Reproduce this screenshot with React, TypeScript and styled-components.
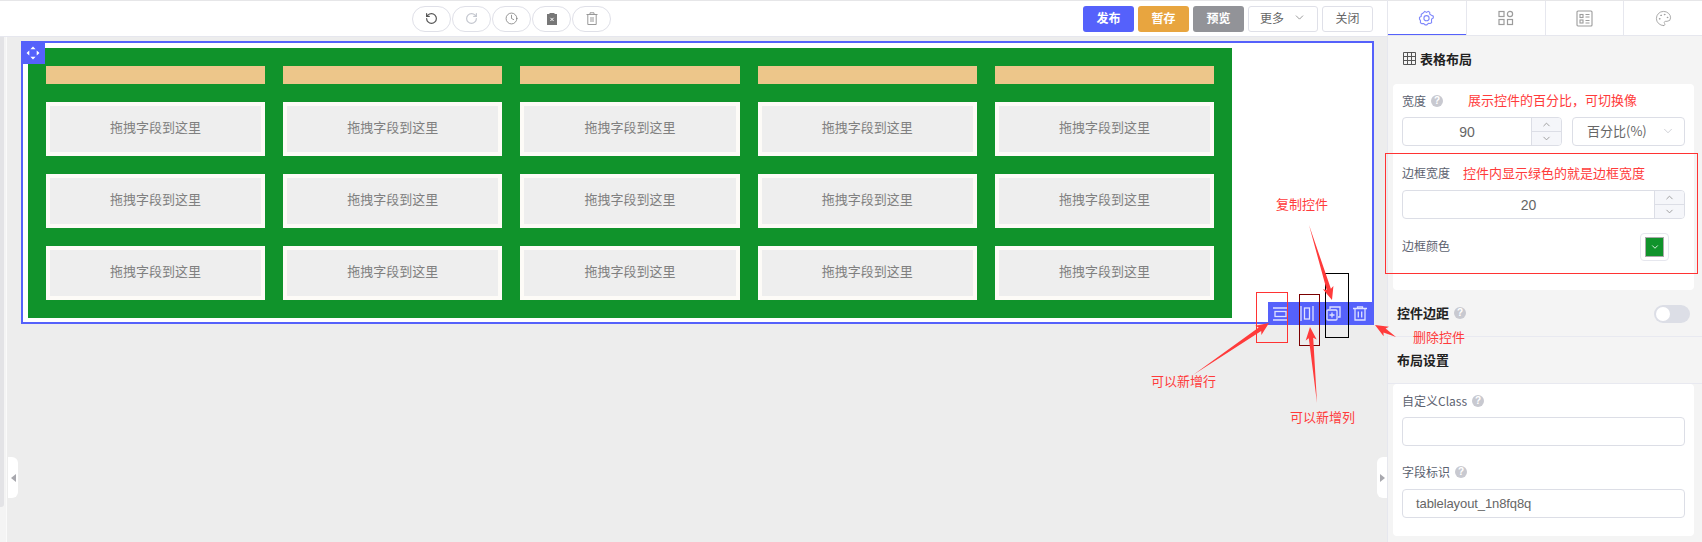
import React from "react";
import styled, { createGlobalStyle } from "styled-components";
import { ChevronDown, ChevronUp, Clock, Palette, RotateCcw, RotateCw } from "lucide-react";

const GlobalStyle = createGlobalStyle`
  * { box-sizing: border-box; }
  html, body { margin: 0; padding: 0; background: #ededed; }
  body { font-family: "Liberation Sans", "Noto Sans CJK SC", sans-serif; }
`;

const Page = styled.div`
  position: relative;
  display: flex;
  width: 1702px;
  height: 542px;
  overflow: hidden;
`;

const Workspace = styled.div`
  display: flex;
  flex-direction: column;
  width: 1387px;
`;

const TopBar = styled.div`
  display: flex;
  align-items: center;
  height: 37px;
  padding: 0 14px 0 412px;
  background: #fff;
  border-top: 1px solid #e6e6e8;
  border-bottom: 1px solid #e6e7ee;
`;

const HistoryGroup = styled.div`
  display: flex;
  gap: 1px;
  margin-right: auto;
`;

const HistoryButton = styled.button<{ $color: string }>`
  display: flex;
  align-items: center;
  justify-content: center;
  width: 39px;
  height: 26px;
  padding: 0;
  background: #fff;
  border: 1px solid #dfe0e8;
  border-radius: 13px;
  color: ${(props) => props.$color};
`;

const ActionGroup = styled.div`
  display: flex;
  gap: 4px;
`;

const ActionButton = styled.button<{ $bg: string }>`
  width: 51px;
  height: 26px;
  padding: 0 0 3px;
  background: ${(props) => props.$bg};
  border: none;
  border-radius: 3px;
  color: #fff;
  font: bold 12px "Noto Sans CJK SC", sans-serif;
`;

const PlainButton = styled.button<{ $width: number }>`
  display: flex;
  align-items: center;
  justify-content: center;
  gap: 9px;
  width: ${(props) => props.$width}px;
  height: 26px;
  padding: 0 0 2px;
  background: #fff;
  border: 1px solid #dfe0e8;
  border-radius: 3px;
  color: #666;
  font: 12px "Noto Sans CJK SC", sans-serif;
`;

const CanvasRow = styled.div`
  display: flex;
  flex: 1;
`;

const Rail = styled.div`
  width: 7px;
  background: #f4f4f4;
  border-right: 1px solid #fafafa;
`;

const RailBar = styled.div`
  width: 4px;
  height: 470px;
  background: #e3e3e6;
  border-radius: 0 0 3px 0;
`;

const Canvas = styled.div`
  position: relative;
  flex: 1;
  padding: 4px 13px 0 14px;
  background: #ededed;
`;

const Widget = styled.div`
  position: relative;
  height: 283px;
  padding: 5px;
  background: #fff;
  border: 2px solid #5561fb;
`;

const Grip = styled.div`
  position: absolute;
  top: -2px;
  left: -2px;
  display: flex;
  align-items: center;
  justify-content: center;
  width: 24px;
  height: 23px;
  background: #5561fb;
`;

const WidgetTools = styled.div`
  position: absolute;
  right: -2px;
  bottom: -3px;
  display: flex;
  align-items: center;
  justify-content: flex-end;
  width: 106px;
  height: 23px;
  padding-right: 1px;
  background: #5561fb;
`;

const ToolIcon = styled.span`
  display: flex;
  align-items: center;
  justify-content: center;
  width: 26.5px;
`;

const GreenTable = styled.div`
  display: grid;
  grid-template-columns: repeat(5, 1fr);
  gap: 18px;
  width: 1204px;
  padding: 18px;
  background: #10932b;
`;

const HeadBar = styled.div`
  height: 18px;
  background: #edc68a;
`;

const DropCell = styled.div`
  display: flex;
  align-items: center;
  justify-content: center;
  height: 54px;
  padding-bottom: 6px;
  background: #eee;
  border: 4px solid #fdfbf7;
  color: #808080;
  font: 13px "Noto Sans CJK SC", sans-serif;
`;

const SideHandle = styled.div<{ $side: "left" | "right" }>`
  position: absolute;
  top: 420px;
  ${(props) => props.$side}: ${(props) => (props.$side === "left" ? 1 : 0)}px;
  display: flex;
  align-items: center;
  justify-content: center;
  width: 10px;
  height: 41px;
  background: #fff;
  border-radius: ${(props) => (props.$side === "left" ? "0 6px 6px 0" : "6px 0 0 6px")};
`;

const Panel = styled.div`
  width: 315px;
  background: #f4f4f4;
  border-left: 1px solid #e6e7ee;
`;

const TabBar = styled.div`
  display: flex;
  height: 36px;
  background: #fff;
  border-top: 1px solid #e6e6e8;
  border-bottom: 1px solid #e6e7ee;
`;

const Tab = styled.div<{ $active?: boolean }>`
  display: flex;
  flex: 1;
  align-items: center;
  justify-content: center;
  color: ${(props) => (props.$active ? "#7f88fb" : "#9c9c9c")};
  border-right: 1px solid #e6e7ee;
  box-shadow: ${(props) => (props.$active ? "inset 0 -1px 0 #5561fb" : "none")};
  &:last-child {
    border-right: none;
  }
`;

const SectionTitle = styled.div`
  display: flex;
  align-items: center;
  gap: 4px;
  height: 48px;
  padding: 0 0 3px 15px;
  color: #222;
  font: bold 13px "Noto Sans CJK SC", sans-serif;
`;

const Card = styled.div<{ $bottom: number }>`
  margin: 0 8px 0 5px;
  padding: 9px 9px ${(props) => props.$bottom}px;
  background: #fff;
  border-radius: 4px;
`;

const FieldLabel = styled.div<{ $after: number }>`
  display: flex;
  align-items: center;
  gap: 5px;
  height: 18px;
  margin-bottom: ${(props) => props.$after}px;
  padding-bottom: 3px;
  color: #5c6270;
  font: 12px "Noto Sans CJK SC", "Liberation Sans", sans-serif;
`;

const Help = styled.span`
  display: inline-flex;
  align-items: center;
  justify-content: center;
  width: 12px;
  height: 12px;
  background: #c8c9d0;
  border-radius: 50%;
  color: #fff;
  font: bold 10px "Liberation Sans", sans-serif;
`;

const InputRow = styled.div<{ $after: number }>`
  display: flex;
  gap: 10px;
  margin-bottom: ${(props) => props.$after}px;
`;

const NumberBox = styled.div<{ $width: number }>`
  display: flex;
  width: ${(props) => props.$width}px;
  height: 29px;
  background: #fff;
  border: 1px solid #dcdee6;
  border-radius: 4px;
  overflow: hidden;
`;

const NumberValue = styled.div`
  display: flex;
  flex: 1;
  align-items: center;
  justify-content: center;
  color: #666;
  font-size: 14px;
`;

const Stepper = styled.div`
  display: flex;
  flex-direction: column;
  width: 30px;
  background: #f5f6fa;
  border-left: 1px solid #dcdee6;
  color: #999;
`;

const StepButton = styled.div`
  display: flex;
  flex: 1;
  align-items: center;
  justify-content: center;
  &:first-child {
    border-bottom: 1px solid #dcdee6;
  }
`;

const SelectBox = styled.div`
  display: flex;
  flex: 1;
  align-items: center;
  justify-content: space-between;
  height: 29px;
  padding: 0 9px 2px 14px;
  border: 1px solid #dcdee6;
  border-radius: 4px;
  color: #666;
  font: 13px "Noto Sans CJK SC", "Liberation Sans", sans-serif;
  white-space: nowrap;
`;

const ColorRow = styled.div`
  display: flex;
  align-items: center;
  justify-content: space-between;
  padding-right: 16px;
`;

const ColorPicker = styled.div`
  display: flex;
  align-items: center;
  justify-content: center;
  width: 29px;
  height: 28px;
  background: #fff;
  border: 1px solid #e6e7ee;
  border-radius: 4px;
`;

const ColorFill = styled.div`
  display: flex;
  align-items: center;
  justify-content: center;
  width: 19px;
  height: 20px;
  background: #10932b;
  border: 1px solid #aaa;
  color: #fff;
`;

const ToggleSection = styled.div`
  display: flex;
  align-items: center;
  justify-content: space-between;
  height: 47px;
  padding: 2px 12px 0 9px;
  border-bottom: 1px solid #e8e9f0;
  color: #222;
  font: bold 13px "Noto Sans CJK SC", sans-serif;
`;

const ToggleLabel = styled.span`
  display: flex;
  align-items: center;
  gap: 5px;
  margin-bottom: 3px;
`;

const Toggle = styled.div`
  width: 36px;
  height: 18px;
  padding: 2px;
  background: #dcdee6;
  border-radius: 9px;
  &::before {
    content: "";
    display: block;
    width: 14px;
    height: 14px;
    background: #fff;
    border-radius: 50%;
  }
`;

const PlainSection = styled.div`
  display: flex;
  align-items: center;
  height: 47px;
  padding: 0 0 2px 9px;
  border-bottom: 1px solid #e8e9f0;
  color: #222;
  font: bold 13px "Noto Sans CJK SC", sans-serif;
`;

const TextBox = styled.div<{ $after?: number }>`
  display: flex;
  align-items: center;
  height: 29px;
  margin-bottom: ${(props) => props.$after || 0}px;
  padding-left: 13px;
  border: 1px solid #dcdee6;
  border-radius: 4px;
  color: #666;
  font-size: 13px;
  letter-spacing: -0.1px;
`;

const Note = styled.span<{ $x: number; $y: number }>`
  position: absolute;
  left: ${(props) => props.$x}px;
  top: ${(props) => props.$y}px;
  color: #ff3b3b;
  font: 13px/18px "Noto Sans CJK SC", sans-serif;
  white-space: nowrap;
`;

const Frame = styled.div<{ $x: number; $y: number; $w: number; $h: number; $color: string }>`
  position: absolute;
  left: ${(props) => props.$x}px;
  top: ${(props) => props.$y}px;
  width: ${(props) => props.$w}px;
  height: ${(props) => props.$h}px;
  border: 1px solid ${(props) => props.$color};
`;

const ArrowLayer = styled.svg`
  position: absolute;
  top: 0;
  left: 0;
  pointer-events: none;
`;

const columns = [0, 1, 2, 3, 4];
const rows = [0, 1, 2];

// tail is a thin point, the head is a barbed triangle
const arrowPoints = (x1: number, y1: number, x2: number, y2: number) => {
  const len = Math.hypot(x2 - x1, y2 - y1);
  const ux = (x2 - x1) / len;
  const uy = (y2 - y1) / len;
  const nx = -uy;
  const ny = ux;
  const at = (back: number, side: number) =>
    `${(x2 - ux * back + nx * side).toFixed(1)},${(y2 - uy * back + ny * side).toFixed(1)}`;
  return [`${x1},${y1}`, at(11, 2.2), at(13, 5.5), `${x2},${y2}`, at(13, -5.5), at(11, -2.2)].join(" ");
};

const arrows = [
  [1309, 225, 1332, 300],
  [1193, 375, 1269, 323],
  [1317, 403, 1310, 327],
  [1396, 337, 1375, 325],
];

const ClipboardX = () => (
  <svg width="12" height="13" viewBox="0 0 12 13">
    <path d="M1 2h2.5V1h5v1H11v11H1z" fill="#777" />
    <path d="M4.4 5.8l3.2 3.2M7.6 5.8L4.4 9" stroke="#fff" strokeWidth="1" />
  </svg>
);

const ClipboardTrash = () => (
  <svg width="12" height="13" viewBox="0 0 12 13" fill="none" stroke="#999">
    <path d="M.5 2.5h11M4 2.5V.8h4v1.7M1.8 2.5v10h8.4v-10" />
    <path d="M4 5h4v5H4z" fill="#ccc" stroke="none" />
  </svg>
);

const GearIcon = () => (
  <svg width="17" height="17" viewBox="0 0 17 17" fill="none" stroke="currentColor" strokeWidth="1.1">
    <path d="M6.8 1.4l1.7 1 1.7-1 1.5.9.1 2 1.7 1 1.8.9v1.7L13.6 9l-.1 1.7.1 1.9-1.5.9-1.7-.1-1.6 1.5H7.2l-1.5-1.4-1.9.1-1.4-.9.1-2L1.5 9V7.4l1.7-1 .1-2 1.5-1.1z" />
    <circle cx="8.5" cy="8.2" r="2.6" />
  </svg>
);

const BlocksIcon = () => (
  <svg width="16" height="16" viewBox="0 0 16 16" fill="none" stroke="currentColor" strokeWidth="1.2">
    <rect x="1" y="1.5" width="5" height="5" />
    <circle cx="12" cy="4" r="2.6" />
    <rect x="1" y="9.5" width="5" height="5" />
    <rect x="9.5" y="9.5" width="5" height="5" />
  </svg>
);

const FormIcon = () => (
  <svg width="17" height="17" viewBox="0 0 17 17" fill="none" stroke="currentColor" strokeWidth="1.1">
    <rect x="1" y="1" width="15" height="15" rx="1" />
    <rect x="4" y="4.5" width="3" height="3" />
    <rect x="4" y="10" width="3" height="3" />
    <path d="M9.5 4.5h4M9.5 7h4M9.5 10.5h4M9.5 13h4" />
  </svg>
);

const TableIcon = () => (
  <svg width="13" height="13" viewBox="0 0 13 13" fill="none" stroke="#555" strokeWidth="1">
    <path d="M.5.5h12v12H.5zM.5 4.5h12M.5 8.5h12M4.5.5v12M8.5.5v12" />
  </svg>
);

const MoveIcon = () => (
  <svg width="14" height="14" viewBox="0 0 14 14" fill="#fff">
    <path d="M7 .5l2.6 2.8H4.4zM7 13.5l-2.6-2.8h5.2zM.5 7l2.8-2.6v5.2zM13.5 7l-2.8 2.6V4.4z" />
  </svg>
);

const stroke = "#dfe2ff";

const AddRowIcon = () => (
  <svg width="16" height="14" viewBox="0 0 16 14" fill="none" stroke={stroke} strokeWidth="1.3">
    <path d="M0 1h15M0 13h15" />
    <rect x="2" y="4.5" width="11" height="5" />
  </svg>
);

const AddColumnIcon = () => (
  <svg width="14" height="16" viewBox="0 0 14 16" fill="none" stroke={stroke} strokeWidth="1.3">
    <path d="M1 0v15M13 0v15" />
    <rect x="4.5" y="2" width="5" height="11" />
  </svg>
);

const CopyIcon = () => (
  <svg width="15" height="15" viewBox="0 0 15 15" fill="none" stroke={stroke} strokeWidth="1.3">
    <path d="M4 3V1h10v10h-2" />
    <rect x="1" y="4" width="10" height="10" rx="1" />
    <path d="M3.5 9h5M6 6.5v5" />
  </svg>
);

const BinIcon = () => (
  <svg width="14" height="15" viewBox="0 0 14 15" fill="none" stroke={stroke} strokeWidth="1.3">
    <path d="M0 2.5h14M4.5 2.5V.8h5v1.7M2 2.5V14h10V2.5M5.3 5.5v6M8.7 5.5v6" />
  </svg>
);

const Triangle = ({ dir }: { dir: "left" | "right" }) => (
  <svg width="5" height="8" viewBox="0 0 5 8" fill="#a8a8ae">
    <path d={dir === "left" ? "M5 0v8L0 4z" : "M0 0v8l5-4z"} />
  </svg>
);

const NumberStepper = () => (
  <Stepper>
    <StepButton>
      <ChevronUp size={11} />
    </StepButton>
    <StepButton>
      <ChevronDown size={11} />
    </StepButton>
  </Stepper>
);

export default function App() {
  return (
    <Page>
      <GlobalStyle />
      <Workspace>
        <TopBar>
          <HistoryGroup>
            <HistoryButton $color="#555">
              <RotateCcw size={13} strokeWidth={2.2} />
            </HistoryButton>
            <HistoryButton $color="#c4c7cf">
              <RotateCw size={13} strokeWidth={2.2} />
            </HistoryButton>
            <HistoryButton $color="#777">
              <Clock size={13} strokeWidth={1.4} />
            </HistoryButton>
            <HistoryButton $color="#666">
              <ClipboardX />
            </HistoryButton>
            <HistoryButton $color="#999">
              <ClipboardTrash />
            </HistoryButton>
          </HistoryGroup>
          <ActionGroup>
            <ActionButton $bg="#5561fb">发布</ActionButton>
            <ActionButton $bg="#e8a53f">暂存</ActionButton>
            <ActionButton $bg="#929398">预览</ActionButton>
            <PlainButton $width={70}>
              更多
              <ChevronDown size={13} strokeWidth={1.2} />
            </PlainButton>
            <PlainButton $width={51}>关闭</PlainButton>
          </ActionGroup>
        </TopBar>
        <CanvasRow>
          <Rail>
            <RailBar />
          </Rail>
          <Canvas>
            <Widget>
              <Grip>
                <MoveIcon />
              </Grip>
              <GreenTable>
                {columns.map((c) => (
                  <HeadBar key={c} />
                ))}
                {rows.map((r) =>
                  columns.map((c) => <DropCell key={`${r}-${c}`}>拖拽字段到这里</DropCell>)
                )}
              </GreenTable>
              <WidgetTools>
                <ToolIcon>
                  <AddRowIcon />
                </ToolIcon>
                <ToolIcon>
                  <AddColumnIcon />
                </ToolIcon>
                <ToolIcon>
                  <CopyIcon />
                </ToolIcon>
                <ToolIcon>
                  <BinIcon />
                </ToolIcon>
              </WidgetTools>
            </Widget>
            <SideHandle $side="left">
              <Triangle dir="left" />
            </SideHandle>
            <SideHandle $side="right">
              <Triangle dir="right" />
            </SideHandle>
          </Canvas>
        </CanvasRow>
      </Workspace>
      <Panel>
        <TabBar>
          <Tab $active>
            <GearIcon />
          </Tab>
          <Tab>
            <BlocksIcon />
          </Tab>
          <Tab>
            <FormIcon />
          </Tab>
          <Tab>
            <Palette size={17} strokeWidth={1.2} />
          </Tab>
        </TabBar>
        <SectionTitle>
          <TableIcon />
          表格布局
        </SectionTitle>
        <Card $bottom={29}>
          <FieldLabel $after={6}>
            宽度
            <Help>?</Help>
          </FieldLabel>
          <InputRow $after={19}>
            <NumberBox $width={160}>
              <NumberValue>90</NumberValue>
              <NumberStepper />
            </NumberBox>
            <SelectBox>
              百分比(%)
              <ChevronDown size={14} strokeWidth={1.1} color="#b5b7c0" />
            </SelectBox>
          </InputRow>
          <FieldLabel $after={7}>边框宽度</FieldLabel>
          <InputRow $after={14}>
            <NumberBox $width={283}>
              <NumberValue>20</NumberValue>
              <NumberStepper />
            </NumberBox>
          </InputRow>
          <ColorRow>
            <FieldLabel $after={0}>边框颜色</FieldLabel>
            <ColorPicker>
              <ColorFill>
                <ChevronDown size={10} strokeWidth={2} />
              </ColorFill>
            </ColorPicker>
          </ColorRow>
        </Card>
        <ToggleSection>
          <ToggleLabel>
            控件边距
            <Help>?</Help>
          </ToggleLabel>
          <Toggle />
        </ToggleSection>
        <PlainSection>布局设置</PlainSection>
        <Card $bottom={18}>
          <FieldLabel $after={6}>
            自定义Class
            <Help>?</Help>
          </FieldLabel>
          <TextBox $after={18} />
          <FieldLabel $after={7}>
            字段标识
            <Help>?</Help>
          </FieldLabel>
          <TextBox>tablelayout_1n8fq8q</TextBox>
        </Card>
      </Panel>

      <Frame $x={1256} $y={292} $w={32} $h={51} $color="#ff3333" />
      <Frame $x={1299} $y={294} $w={21} $h={52} $color="#7a0000" />
      <Frame $x={1325} $y={273} $w={24} $h={65} $color="#000" />
      <Frame $x={1385} $y={153} $w={313} $h={121} $color="#ff3333" />
      <ArrowLayer width="1702" height="542">
        {arrows.map(([x1, y1, x2, y2]) => (
          <polygon key={`${x1}-${y1}`} points={arrowPoints(x1, y1, x2, y2)} fill="#ff3b3b" />
        ))}
      </ArrowLayer>
      <Note $x={1468} $y={91}>展示控件的百分比，可切换像</Note>
      <Note $x={1463} $y={164}>控件内显示绿色的就是边框宽度</Note>
      <Note $x={1276} $y={195}>复制控件</Note>
      <Note $x={1413} $y={328}>删除控件</Note>
      <Note $x={1151} $y={372}>可以新增行</Note>
      <Note $x={1290} $y={408}>可以新增列</Note>
    </Page>
  );
}
